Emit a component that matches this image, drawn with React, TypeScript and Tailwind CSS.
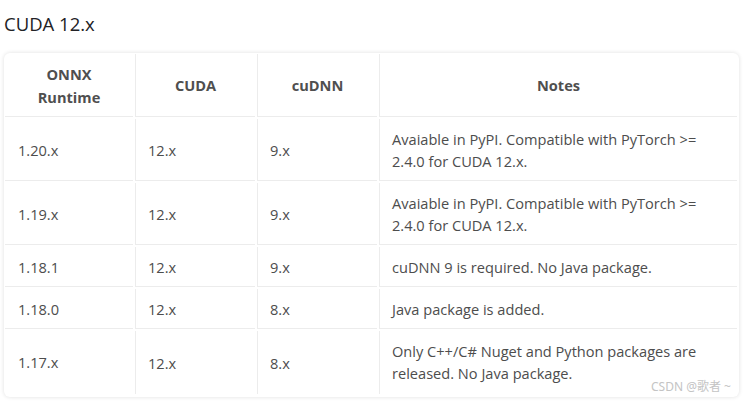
import React from "react";

const rows: { v: string; cuda: string; cudnn: string; notes: string }[] = [
  { v: "1.20.x", cuda: "12.x", cudnn: "9.x", notes: "Avaiable in PyPI. Compatible with PyTorch >= 2.4.0 for CUDA 12.x." },
  { v: "1.19.x", cuda: "12.x", cudnn: "9.x", notes: "Avaiable in PyPI. Compatible with PyTorch >= 2.4.0 for CUDA 12.x." },
  { v: "1.18.1", cuda: "12.x", cudnn: "9.x", notes: "cuDNN 9 is required. No Java package." },
  { v: "1.18.0", cuda: "12.x", cudnn: "8.x", notes: "Java package is added." },
  { v: "1.17.x", cuda: "12.x", cudnn: "8.x", notes: "Only C++/C# Nuget and Python packages are released. No Java package." },
];

export default function App() {
  return (
    <div className="relative w-[748px] h-[403px] overflow-hidden bg-white font-['Open_Sans','Noto_Sans','Noto_Sans_CJK_SC',sans-serif] text-[#4d4d4d]">
      <h3 className="pl-[4px] pt-[10px] text-[18.5px] leading-[28px] text-[#222226] font-normal">CUDA 12.x</h3>
      <div className="mt-[15px] ml-[4px] w-[735px] rounded-[6px] bg-white shadow-[0_0_4px_rgba(0,0,0,0.13)] pt-[1px] pb-[3px] pl-[1px] pr-[2px]">
        <div className="grid grid-cols-[128px_120px_120px_358px] gap-x-[2px] gap-y-[2px] text-[14.6px]">
          <div className="flex items-center justify-center text-center border-b border-[#ececec] pt-[9px] pb-[7px] font-bold leading-[23px] text-[#4f4f4f]">
            ONNX<br />Runtime
          </div>
          <div className="flex items-center justify-center border-l border-b border-[#ececec] font-bold leading-[23px] text-[#4f4f4f]">CUDA</div>
          <div className="flex items-center justify-center border-l border-b border-[#ececec] font-bold leading-[23px] text-[#4f4f4f]">cuDNN</div>
          <div className="flex items-center justify-center border-l border-b border-[#ececec] font-bold leading-[23px] text-[#4f4f4f]">Notes</div>
          {rows.map((r, i) => {
            const last = i === rows.length - 1;
            const b = last ? "" : "border-b";
            const pad = last ? "pt-[9px] pb-[10px]" : "pt-[9px] pb-[8px]";
            return (
              <React.Fragment key={i}>
                <div className={`flex items-center pl-[13px] pr-[12px] ${pad} leading-[22px] border-[#ececec] ${b}`}>{r.v}</div>
                <div className={`flex items-center pl-[12px] pr-[12px] leading-[22px] border-l border-[#ececec] ${b}`}>{r.cuda}</div>
                <div className={`flex items-center pl-[12px] pr-[12px] leading-[22px] border-l border-[#ececec] ${b}`}>{r.cudnn}</div>
                <div className={`flex items-center pl-[12px] pr-[12px] ${pad} leading-[22px] border-l border-[#ececec] ${b}`}>{r.notes}</div>
              </React.Fragment>
            );
          })}
        </div>
      </div>
      <div className="absolute left-[651px] top-[379px] text-[12px] leading-[16px] text-[#c4c4c4] font-['Noto_Sans','Noto_Sans_CJK_SC',sans-serif]">
        CSDN @歌者 ~
      </div>
    </div>
  );
}
